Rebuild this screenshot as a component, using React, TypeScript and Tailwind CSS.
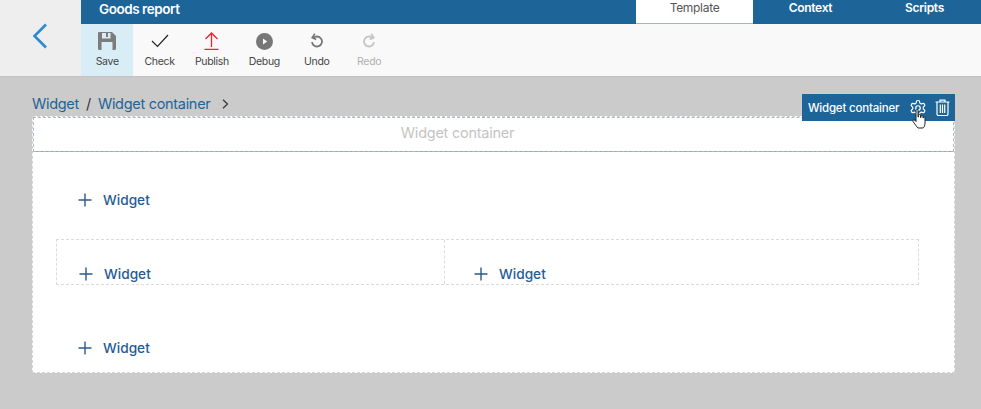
import React from "react";

const ToolBtn = ({ label, icon, active, muted }: { label: string; icon: React.ReactNode; active?: boolean; muted?: boolean }) => (
  <div className={`flex h-[52px] w-[52.4px] flex-col items-center ${active ? "bg-[#d9edf7]" : ""}`}>
    <div className="mt-[6px] flex h-[22px] w-full items-center justify-center">{icon}</div>
    <span className={`mt-[3px] text-[10.5px] leading-[14px] tracking-[-0.3px] ${muted ? "text-[#b0b0b0]" : "text-[#444]"}`}>{label}</span>
  </div>
);

const Plus = () => (
  <svg width="14" height="14" viewBox="0 0 14 14" fill="none" stroke="#2a5a8c" strokeWidth="1.4">
    <path d="M7 0.500V13.500M0.500 7H13.500" />
  </svg>
);

const AddWidget = ({ className }: { className?: string }) => (
  <div className={`flex items-center gap-[11px] ${className ?? ""}`}>
    <Plus />
    <span className="text-[13.7px] font-medium leading-[16px] text-[#1f5c96]">Widget</span>
  </div>
);

export default function App() {
  return (
    <div className="h-[409px] w-[981px] overflow-hidden bg-[#cbcbcb] font-['Inter',sans-serif]">
      <div className="flex h-[77px] border-b border-[#c2c2c2]">
        <div className="flex w-[81px] items-center bg-[#eeeeee] pl-[32px] pb-[4px]">
          <svg width="16" height="26" viewBox="0 0 16 26" fill="none" stroke="#2b8ad0" strokeWidth="2.6">
            <path d="M14 1.500L2.500 13L14 24.500" />
          </svg>
        </div>
        <div className="flex flex-1 flex-col">
          <div className="flex h-[24px] items-stretch bg-[#1d6598] pl-[18px]">
            <span className="flex-1 text-[13.5px] font-semibold leading-[18px] tracking-[-0.45px] text-white">Goods report</span>
            <div className="flex w-[117px] items-start justify-center border-b border-[#9fb6cc] bg-white text-[12px] leading-[16px] tracking-[-0.3px] text-[#555]">Template</div>
            <div className="flex w-[115px] items-start justify-center text-[12px] font-semibold leading-[16px] tracking-[-0.3px] text-white">Context</div>
            <div className="flex w-[113px] items-start justify-center text-[12px] font-semibold leading-[16px] tracking-[-0.3px] text-white">Scripts</div>
          </div>
          <div className="flex h-[52px] bg-[#f9f9f9]">
            <ToolBtn
              active
              label="Save"
              icon={
                <svg width="18" height="18" viewBox="0 0 18 18" fill="#7c7c7c">
                  <path fillRule="evenodd" d="M1 0H14L18 4V16.500A1.500 1.500 0 0 1 16.500 18H1.500A1.500 1.500 0 0 1 0 16.500V1A1 1 0 0 1 1 0ZM4 1V6.500H12.500V1H10V5H8V1ZM3.500 10V18H14.500V10Z" />
                </svg>
              }
            />
            <ToolBtn
              label="Check"
              icon={
                <svg width="18" height="14" viewBox="0 0 18 14" fill="none" stroke="#222" strokeWidth="1.2">
                  <path d="M1 7L6.500 12.500L17 1" />
                </svg>
              }
            />
            <ToolBtn
              label="Publish"
              icon={
                <svg width="15" height="18" viewBox="0 0 15 18" fill="none" stroke="#f0202c" strokeWidth="1.3">
                  <path d="M7.500 15V1M1.500 7L7.500 1L13.500 7M0.500 17.300H14.500" />
                </svg>
              }
            />
            <ToolBtn
              label="Debug"
              icon={
                <svg width="17" height="17" viewBox="0 0 17 17">
                  <circle cx="8.500" cy="8.500" r="8.500" fill="#777" />
                  <path d="M7 5.500L11.200 8.500L7 11.500Z" fill="#f9f9f9" />
                </svg>
              }
            />
            <ToolBtn
              label="Undo"
              icon={
                <svg width="13" height="16" viewBox="0 0 13 16" fill="none" stroke="#777" strokeWidth="1.8">
                  <path d="M3.200 5.200A5 5 0 1 1 2 9" />
                  <path d="M4.800 0.800L2.200 4.600L6.200 6.400" strokeWidth="1.600" />
                </svg>
              }
            />
            <ToolBtn
              muted
              label="Redo"
              icon={
                <svg width="13" height="16" viewBox="0 0 13 16" fill="none" stroke="#c4c4c4" strokeWidth="1.8">
                  <path d="M9.800 5.200A5 5 0 1 0 11 9" />
                  <path d="M8.200 0.800L10.800 4.600L6.800 6.400" strokeWidth="1.600" />
                </svg>
              }
            />
          </div>
        </div>
      </div>

      <div className="relative mx-[32px] w-[923px]">
        <div className="flex h-[40px] items-end pb-[3px] text-[14.5px] leading-[20px] tracking-[-0.3px] text-[#1f6496]">
          <span>Widget</span>
          <span className="mx-[7px] text-[#333]">/</span>
          <span>Widget container</span>
          <svg className="mb-[5px] ml-[12px]" width="7" height="10" viewBox="0 0 7 10" fill="none" stroke="#333" strokeWidth="1.2">
            <path d="M1 0.800L5.500 5L1 9.200" />
          </svg>
        </div>

        <div className="absolute right-0 top-[17px] z-10 flex h-[27px] w-[153px] items-center bg-[#1d6598] pl-[6px] text-white">
          <span className="w-[91px] whitespace-nowrap text-[11.5px] font-medium leading-[16px] tracking-[-0.2px]">Widget container</span>
          <svg className="ml-[10px]" width="18" height="18" viewBox="0 0 24 24" fill="none" stroke="white" strokeWidth="1.600" strokeLinecap="round" strokeLinejoin="round">
            <path d="M12.220 2h-.44a2 2 0 0 0-2 2v.18a2 2 0 0 1-1 1.730l-.43.250a2 2 0 0 1-2 0l-.15-.08a2 2 0 0 0-2.730.730l-.22.380a2 2 0 0 0 .730 2.730l.15.100a2 2 0 0 1 1 1.720v.510a2 2 0 0 1-1 1.740l-.15.090a2 2 0 0 0-.730 2.730l.22.380a2 2 0 0 0 2.730.730l.15-.08a2 2 0 0 1 2 0l.43.250a2 2 0 0 1 1 1.730V20a2 2 0 0 0 2 2h.44a2 2 0 0 0 2-2v-.18a2 2 0 0 1 1-1.730l.43-.250a2 2 0 0 1 2 0l.15.080a2 2 0 0 0 2.730-.730l.22-.390a2 2 0 0 0-.730-2.730l-.15-.080a2 2 0 0 1-1-1.740v-.500a2 2 0 0 1 1-1.740l.15-.090a2 2 0 0 0 .730-2.730l-.22-.380a2 2 0 0 0-2.730-.730l-.15.080a2 2 0 0 1-2 0l-.43-.250a2 2 0 0 1-1-1.730V4a2 2 0 0 0-2-2z" />
            <circle cx="12" cy="12" r="3" />
          </svg>
          <svg className="ml-[8px]" width="15" height="17" viewBox="0 0 15 17" fill="none" stroke="white" strokeWidth="1.200">
            <path d="M0.500 3H14.500M5 3V1.200H10V3M2 3V15A1.500 1.500 0 0 0 3.500 16.500H11.500A1.500 1.500 0 0 0 13 15V3M5.300 5.500V14M7.500 5.500V14M9.700 5.500V14" />
          </svg>
          <svg className="absolute left-[110px] top-[15px]" width="14" height="20" viewBox="0 0 14 20" fill="white" stroke="#222" strokeWidth="1">
            <path d="M4 1.500A1 1 0 0 1 6 1.500V8H6.500V6.500A1 1 0 0 1 8.500 6.500V8.500H9V7.500A1 1 0 0 1 11 7.500V9H11.300V8.500A1 1 0 0 1 13 8.500V14C13 16.500 12 18.500 11 19H6C5 18 3.500 16 1 12.500C0.500 11.500 1.500 10.300 2.800 11.200L4 12.500Z" />
          </svg>
        </div>

        <div className="h-[257px] -mt-[1px] border border-dashed border-[#d4d4d4] bg-white">
          <div className="flex h-[35px] items-center justify-center border-b border-[#8fa5c4] pr-[72px] pb-[2px] text-[14.5px] tracking-[-0.25px] text-[#c4c4c4] outline-1 -outline-offset-1 outline-dashed outline-[#aab8cc]">
            Widget container
          </div>
          <AddWidget className="ml-[45px] mt-[40px]" />
          <div className="ml-[23px] mt-[31px] flex h-[46px] w-[863px] border border-dashed border-[#dcdcdc]">
            <div className="flex w-[388px] items-end border-r border-dashed border-[#dcdcdc] pb-[2px] pl-[22px]">
              <AddWidget />
            </div>
            <div className="flex flex-1 items-end pb-[2px] pl-[29px]">
              <AddWidget />
            </div>
          </div>
          <AddWidget className="ml-[45px] mt-[55px]" />
        </div>
      </div>
    </div>
  );
}
